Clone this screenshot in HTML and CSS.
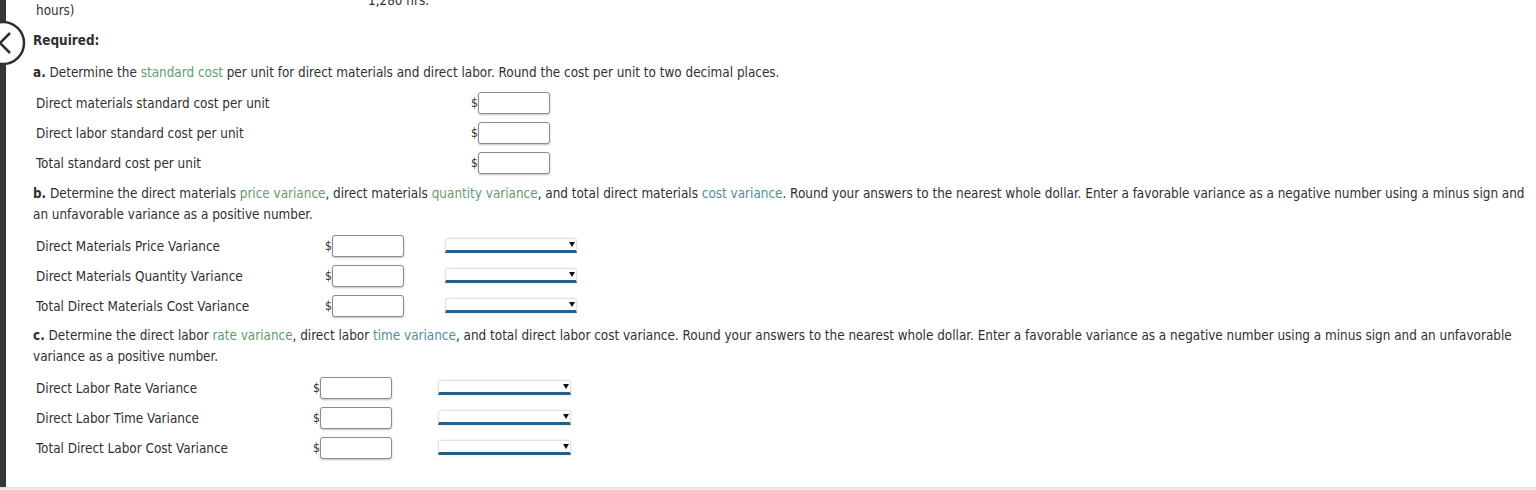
FILE: index.html
```html
<!DOCTYPE html>
<html lang="en">
<head>
<meta charset="utf-8">
<title>Standard cost variances</title>
<link rel="stylesheet" href="styles.css">
</head>
<body>
<div class="screen">
  <div class="rail"></div>
  <button class="back" aria-label="Back">
    <svg width="48" height="48" viewBox="0 0 48 48"><circle cx="24" cy="24" r="21" fill="#fff" stroke="#2f2f2f" stroke-width="2.5"/><polyline points="31,14 21,24 31,34" fill="none" stroke="#2f2f2f" stroke-width="2.5"/></svg>
  </button>
  <main class="content">
    <div class="given">
      <div class="given-label">&nbsp;<br>hours)</div>
      <div class="given-value">1,280 hrs.</div>
    </div>
    <h3 class="required">Required:</h3>

    <p class="q q-a"><b>a.</b> Determine the <span class="term">standard cost</span> per unit for direct materials and direct labor. Round the cost per unit to two decimal places.</p>
    <div class="answers answers-a">
      <div class="row"><span class="lbl">Direct materials standard cost per unit</span><span class="cur">$</span><input class="num" type="text"></div>
      <div class="row"><span class="lbl">Direct labor standard cost per unit</span><span class="cur">$</span><input class="num" type="text"></div>
      <div class="row"><span class="lbl">Total standard cost per unit</span><span class="cur">$</span><input class="num" type="text"></div>
    </div>

    <p class="q q-b"><b>b.</b> Determine the direct materials <span class="term">price variance</span>, direct materials <span class="term">quantity variance</span>, and total direct materials <span class="term alt">cost variance</span>. Round your answers to the nearest whole dollar. Enter a favorable variance as a negative number using a minus sign and an unfavorable variance as a positive number.</p>
    <div class="answers answers-b">
      <div class="row"><span class="lbl">Direct Materials Price Variance</span><span class="cur">$</span><input class="num" type="text"><div class="pick"><span class="caret"></span></div></div>
      <div class="row"><span class="lbl">Direct Materials Quantity Variance</span><span class="cur">$</span><input class="num" type="text"><div class="pick"><span class="caret"></span></div></div>
      <div class="row"><span class="lbl">Total Direct Materials Cost Variance</span><span class="cur">$</span><input class="num" type="text"><div class="pick"><span class="caret"></span></div></div>
    </div>

    <p class="q q-c"><b>c.</b> Determine the direct labor <span class="term">rate variance</span>, direct labor <span class="term alt">time variance</span>, and total direct labor cost variance. Round your answers to the nearest whole dollar. Enter a favorable variance as a negative number using a minus sign and an unfavorable variance as a positive number.</p>
    <div class="answers answers-c">
      <div class="row"><span class="lbl">Direct Labor Rate Variance</span><span class="cur">$</span><input class="num" type="text"><div class="pick"><span class="caret"></span></div></div>
      <div class="row"><span class="lbl">Direct Labor Time Variance</span><span class="cur">$</span><input class="num" type="text"><div class="pick"><span class="caret"></span></div></div>
      <div class="row"><span class="lbl">Total Direct Labor Cost Variance</span><span class="cur">$</span><input class="num" type="text"><div class="pick"><span class="caret"></span></div></div>
    </div>
  </main>
</div>
<div class="bottom-edge"></div>
</body>
</html>
```
FILE: styles.css
```css
html, body {
  margin: 0;
  padding: 0;
  background: #fff;
  overflow: hidden;
}
body {
  font-family: "DejaVu Sans Condensed", "DejaVu Sans", Verdana, sans-serif;
  font-size: 13.4px;
  color: #303030;
  line-height: 21px;
}
.screen {
  display: flex;
  height: 487px;
  overflow: hidden;
  position: relative;
}
.rail {
  flex: 0 0 6px;
  background: #363636;
}
.back {
  position: absolute;
  left: -21px;
  top: 19px;
  width: 48px;
  height: 48px;
  padding: 0;
  border: 0;
  background: transparent;
}
.back svg { display: block; }
.content {
  flex: 1;
  padding: 0 4px 0 27px;
  margin-top: -21px;
}
.given {
  display: grid;
  grid-template-columns: 332px auto;
  align-items: center;
  padding-left: 3px;
}
.required {
  margin: 9px 0 0;
  font-size: 13.4px;
  font-weight: bold;
  line-height: 21px;
}
.q { margin: 0; }
.q-a { margin-top: 11px; }
.q-b { margin-top: 5px; }
.q-c { margin-top: 4px; margin-right: 8px; }
.answers-a { margin-top: 5px; }
.answers-b, .answers-c { margin-top: 6px; }
.term { color: #5f9d6e; }
.term.alt { color: #4f8f9a; }
.answers {
  padding-left: 3px;
}
.row {
  display: flex;
  align-items: center;
  height: 30px;
}
.lbl { flex: 0 0 auto; }
.answers-a .lbl { width: 435px; }
.answers-b .lbl { width: 289px; }
.answers-c .lbl { width: 277px; }
.cur {
  display: inline-block;
  width: 7px;
  font-size: 12px;
}
.num {
  width: 72px;
  height: 22px;
  box-sizing: border-box;
  margin: 0;
  border: 1px solid #8c8c8c;
  border-radius: 3px;
  box-shadow: 0 1px 2px rgba(0,0,0,0.25);
  background: #fff;
  font: inherit;
}
.pick {
  width: 132px;
  height: 15px;
  box-sizing: border-box;
  margin-left: 41px;
  margin-top: -1px;
  border: 1px solid #e2e2e2;
  border-bottom: 3px solid #22608b;
  border-radius: 3px 3px 0 0;
  box-shadow: 0 0 2px rgba(0,0,0,0.12);
  display: flex;
  align-items: center;
  justify-content: flex-end;
}
.answers-c .pick { margin-left: 46px; width: 133px; }
.caret {
  width: 0;
  height: 0;
  margin-right: 1px;
  border-left: 3.5px solid transparent;
  border-right: 3.5px solid transparent;
  border-top: 5px solid #111;
}
.bottom-edge {
  height: 3px;
  background: linear-gradient(#dcdcdc, #f1f1f1);
}
```
